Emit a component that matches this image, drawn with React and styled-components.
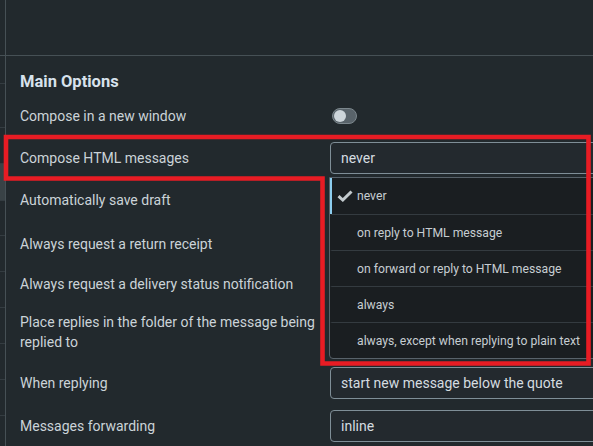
import styled, { createGlobalStyle } from "styled-components";

const GlobalStyle = createGlobalStyle`
  html, body {
    margin: 0;
    padding: 0;
    background: #22292d;
    overflow: hidden;
  }
  body {
    font-family: Roboto, "Liberation Sans", sans-serif;
  }
`;

const sideRows = [28, 44, 36, 37, 35, 36, 36, 36, 36, 36, 36];

const options = [
  "never",
  "on reply to HTML message",
  "on forward or reply to HTML message",
  "always",
  "always, except when replying to plain text",
];

export default function App() {
  return (
    <>
      <GlobalStyle />
      <Page>
        <Sidebar>
          <SideHead />
          {sideRows.map((h, i) => (
            <SideRow key={i} $h={h} $active={i === 3} />
          ))}
        </Sidebar>

        <Main>
          <TopBar />
          <Heading>Main Options</Heading>

          <Row $h={40}>
            <Label>Compose in a new window</Label>
            <Control>
              <Toggle />
            </Control>
          </Row>

          <Row $h={44}>
            <Label>Compose HTML messages</Label>
            <Control>
              <Select>never</Select>
              <Menu>
                {options.map((o, i) => (
                  <MenuItem key={o} $selected={i === 0}>
                    <Check>
                      {i === 0 && (
                        <svg width="16" height="12" viewBox="0 0 16 12">
                          <path
                            d="M1.5 6.2 L5.8 10 L14.5 1.5"
                            fill="none"
                            stroke="#c3cace"
                            strokeWidth="3"
                          />
                        </svg>
                      )}
                    </Check>
                    {o}
                  </MenuItem>
                ))}
              </Menu>
            </Control>
          </Row>

          <Row $h={40}>
            <Label>Automatically save draft</Label>
          </Row>
          <Row $h={48}>
            <Label>Always request a return receipt</Label>
          </Row>
          <Row $h={32}>
            <Label>Always request a delivery status notification</Label>
          </Row>
          <Row $h={64}>
            <Label>Place replies in the folder of the message being replied to</Label>
          </Row>
          <Row $h={38}>
            <Label>When replying</Label>
            <Control>
              <Select>start new message below the quote</Select>
            </Control>
          </Row>
          <Row $h={48}>
            <Label>Messages forwarding</Label>
            <Control>
              <Select>inline</Select>
            </Control>
          </Row>
        </Main>

        <Marker width="593" height="446" viewBox="0 0 593 446">
          <path
            d="M6 137 H588.5 V363.5 H322.5 V178.5 H6 Z"
            fill="none"
            stroke="#e81c24"
            strokeWidth="4.6"
          />
        </Marker>
      </Page>
    </>
  );
}

const Page = styled.div`
  position: relative;
  display: flex;
  width: 593px;
  height: 446px;
  overflow: hidden;
  background: #22292d;
`;

const Sidebar = styled.div`
  width: 5px;
  flex-shrink: 0;
  border-right: 1px solid #465055;
  display: flex;
  flex-direction: column;
`;

const SideHead = styled.div`
  height: 55px;
  flex-shrink: 0;
  border-bottom: 1px solid #465055;
`;

const SideRow = styled.div`
  height: ${(p) => p.$h - 1}px;
  flex-shrink: 0;
  border-bottom: 1px solid #343c41;
  background: ${(p) => (p.$active ? "#394246" : "transparent")};
`;

const Main = styled.div`
  flex: 1;
  min-width: 0;
  display: flex;
  flex-direction: column;
`;

const TopBar = styled.div`
  height: 55px;
  flex-shrink: 0;
  border-bottom: 1px solid #465055;
`;

const Heading = styled.div`
  height: 40px;
  flex-shrink: 0;
  box-sizing: border-box;
  padding: 16px 0 0 14px;
  line-height: 20px;
  font-size: 16.5px;
  font-weight: 700;
  color: #d8e2ec;
`;

const Row = styled.div`
  height: ${(p) => p.$h}px;
  flex-shrink: 0;
  display: grid;
  grid-template-columns: 310px 1fr;
  align-items: center;
  padding-left: 14px;
`;

const Label = styled.div`
  font-size: 14px;
  line-height: 20px;
  color: #cbd3d8;
  padding-right: 14px;
`;

const Control = styled.div`
  position: relative;
  display: flex;
  align-items: center;
`;

const Toggle = styled.div`
  position: relative;
  width: 25px;
  height: 16px;
  box-sizing: border-box;
  margin-left: 2px;
  border-radius: 8px;
  background: #59636a;
  border: 1px solid #7c878d;
  &::after {
    content: "";
    position: absolute;
    left: 1px;
    top: 1px;
    width: 12px;
    height: 12px;
    border-radius: 50%;
    background: #cdd5da;
  }
`;

const Select = styled.div`
  width: 300px;
  height: 32px;
  flex-shrink: 0;
  box-sizing: border-box;
  border: 1px solid #7f8e97;
  border-radius: 4px;
  padding: 0 10px;
  display: flex;
  align-items: center;
  font-size: 14px;
  color: #d5dce0;
  background: #23292e;
`;

const Menu = styled.div`
  position: absolute;
  top: 35px;
  left: -1px;
  width: 300px;
  background: #1a1e21;
  border: 1px solid #58626a;
  border-radius: 0 0 4px 4px;
  z-index: 5;
`;

const MenuItem = styled.div`
  height: 36px;
  box-sizing: border-box;
  display: flex;
  align-items: center;
  font-size: 12.2px;
  color: #c6cdd1;
  border-top: ${(p) => (p.$selected ? "none" : "1px solid #343b40")};
  border-left: 2px solid ${(p) => (p.$selected ? "#8ccdee" : "transparent")};
  padding-left: 5px;
`;

const Check = styled.span`
  width: 20px;
  display: inline-flex;
  align-items: center;
`;

const Marker = styled.svg`
  position: absolute;
  left: 0;
  top: 0;
  pointer-events: none;
  z-index: 10;
`;
